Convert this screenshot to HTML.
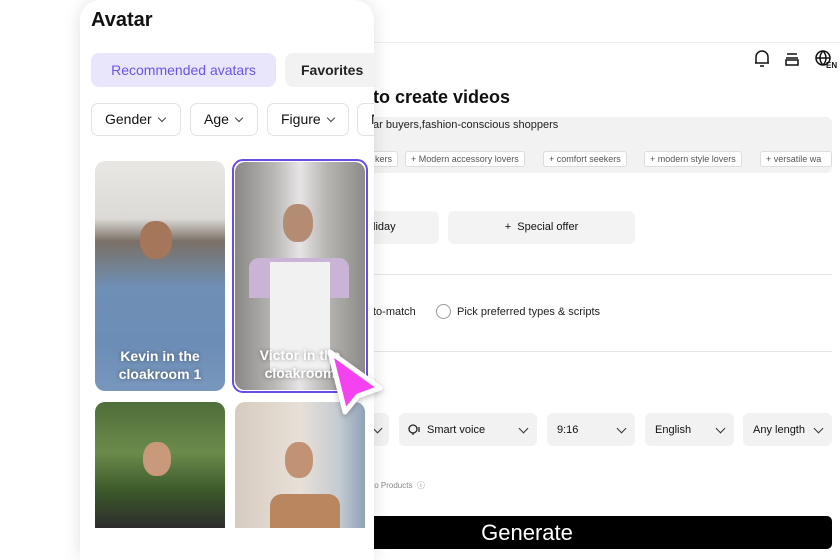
<!DOCTYPE html>
<html><head><meta charset="utf-8"><style>
*{margin:0;padding:0;box-sizing:border-box}
body{width:840px;height:560px;overflow:hidden;background:#fff;font-family:"Liberation Sans",sans-serif;position:relative;color:#111}
.abs{position:absolute}
.back{left:360px;top:42px;width:480px;height:518px;background:#fff;border-top:1px solid #eee}
.gbox{background:#f2f2f2;border-radius:6px}
.tag{position:absolute;top:151px;height:16px;border:1px solid #ddd;background:#fff;border-radius:3px;font-size:9px;color:#555;line-height:14px;padding:0 5px;white-space:nowrap}
.btn{position:absolute;background:#f3f3f3;border-radius:6px;font-size:11px;line-height:33px}
.sel{position:absolute;top:413px;height:33px;background:#f2f2f2;border-radius:6px;font-size:11px;line-height:34px;padding-left:10px}
.chev{position:absolute;right:10px;top:12px;width:7px;height:7px;border-right:1.4px solid #333;border-bottom:1.4px solid #333;transform:rotate(45deg)}
.panel{left:80px;top:0;width:294px;height:560px;background:#fff;border-radius:20px 20px 0 0;box-shadow:0 0 18px rgba(0,0,0,.12);overflow:hidden}
.flt{position:absolute;top:103px;height:33px;border:1px solid #e2e2e2;border-radius:7px;font-size:14px;line-height:31px;padding-left:13px;background:#fff}
.fch{display:inline-block;width:6px;height:6px;border-right:1.2px solid #444;border-bottom:1.2px solid #444;transform:rotate(45deg);margin-left:7px;position:relative;top:-3px}
.card{position:absolute;border-radius:10px;overflow:hidden}
.cap{position:absolute;left:0;right:0;text-align:center;color:#fff;font-size:14px;font-weight:bold;line-height:18px;text-shadow:0 0 4px rgba(0,0,0,.4)}
</style></head><body>
<div class="abs back">
</div>
<svg class="abs" style="left:752px;top:48px" width="88" height="22" viewBox="0 0 88 22">
<g fill="none" stroke="#111" stroke-width="1.5">
<path d="M4 15 V9 a6 6 0 0 1 12 0 V15 H3 M16 15 h1 M8 18 h4"/>
<path d="M35 6 h10 M34 10 h12 M34 12 h12 v5 h-12 z"/>
<circle cx="71" cy="10" r="7"/><path d="M64 10 h14 M71 3 c-4 4 -4 10 0 14 M71 3 c4 4 4 10 0 14"/>
</g>
<text x="74" y="20" font-size="8" font-weight="bold" fill="#111" font-family="Liberation Sans">EN</text>
</svg>
<div class="abs" style="left:373px;top:87px;font-size:18px;font-weight:bold">to create videos</div>
<div class="abs gbox" style="left:366px;top:117px;width:466px;height:56px"></div>
<div class="abs" style="left:373px;top:119px;font-size:11px;color:#222">ar buyers,fashion-conscious shoppers</div>
<div class="tag" style="left:356px;width:42px;text-align:right">kers</div>
<div class="tag" style="left:405px">+ Modern accessory lovers</div>
<div class="tag" style="left:543px">+ comfort seekers</div>
<div class="tag" style="left:644px">+ modern style lovers</div>
<div class="tag" style="left:760px;width:72px;overflow:hidden">+ versatile wa</div>
<div class="btn" style="left:360px;top:211px;width:79px;padding-left:13px">liday</div>
<div class="btn" style="left:448px;top:211px;width:187px;text-align:center">+&nbsp; Special offer</div>
<div class="abs" style="left:370px;top:274px;width:462px;height:1px;background:#e6e6e6"></div>
<div class="abs" style="left:373px;top:306px;font-size:11px;color:#222">to-match</div>
<div class="abs" style="left:436px;top:304px;width:15px;height:15px;border:1px solid #999;border-radius:50%"></div>
<div class="abs" style="left:457px;top:306px;font-size:11px;color:#222">Pick preferred types &amp; scripts</div>
<div class="abs" style="left:370px;top:351px;width:462px;height:1px;background:#e6e6e6"></div>
<div class="sel" style="left:350px;width:39px"><span class="chev" style="right:8px"></span></div>
<div class="sel" style="left:399px;width:138px;padding-left:28px">Smart voice<span class="chev"></span>
<svg style="position:absolute;left:9px;top:10px" width="14" height="13"><circle cx="5" cy="6" r="4" fill="none" stroke="#222" stroke-width="1.3"/><path d="M5 10v2M11 4v5" stroke="#222" stroke-width="1.3"/></svg></div>
<div class="sel" style="left:547px;width:88px">9:16<span class="chev"></span></div>
<div class="sel" style="left:645px;width:89px">English<span class="chev"></span></div>
<div class="sel" style="left:743px;width:89px">Any length<span class="chev"></span></div>
<div class="abs" style="left:372px;top:480px;font-size:8px;color:#888">to Products &nbsp;ⓘ</div>
<div class="abs" style="left:360px;top:516px;width:472px;height:33px;background:#000;border-radius:5px;color:#fff;font-size:22px;line-height:33px;text-align:center;padding-right:138px">Generate</div>

<div class="abs panel">
<div class="abs" style="left:11px;top:9px;font-size:20px;font-weight:bold">Avatar</div>
<div class="abs" style="left:11px;top:53px;width:185px;height:34px;background:#e9e6fb;border-radius:8px;color:#6b55e6;font-size:14px;line-height:34px;text-align:center">Recommended avatars</div>
<div class="abs" style="left:205px;top:53px;width:100px;height:34px;background:#f2f2f2;border-radius:8px;font-size:14px;line-height:34px;padding-left:16px;font-weight:bold;color:#222">Favorites</div>
<div class="flt" style="left:11px;width:90px">Gender<span class="fch"></span></div>
<div class="flt" style="left:110px;width:68px">Age<span class="fch"></span></div>
<div class="flt" style="left:187px;width:82px">Figure<span class="fch"></span></div>
<div class="flt" style="left:277px;width:30px">N</div>
<div class="card" style="left:15px;top:161px;width:130px;height:230px;background:linear-gradient(180deg,#e9e7e3 0%,#dcdad6 25%,#7a7066 35%,#6f8fb5 55%,#6c8db6 80%,#7997bd 100%)">
<div class="abs" style="left:45px;top:60px;width:32px;height:38px;border-radius:45%;background:#a6765a"></div>
<div class="cap" style="top:186px">Kevin in the<br>cloakroom 1</div></div>
<div class="abs" style="left:152px;top:159px;width:136px;height:234px;border:2px solid #6a4de6;border-radius:11px"></div>
<div class="card" style="left:155px;top:162px;width:130px;height:228px;background:linear-gradient(90deg,#8a8886,#b9b7b4 30%,#e6e4e4 50%,#b8b6b3 70%,#8d8b88)">
<div class="abs" style="left:48px;top:42px;width:30px;height:38px;border-radius:45%;background:#b48c74"></div>
<div class="abs" style="left:14px;top:96px;width:100px;height:40px;background:#c9b4d6;border-radius:10px 10px 0 0"></div>
<div class="abs" style="left:35px;top:100px;width:60px;height:110px;background:#f1f1f1"></div>
<div class="cap" style="top:184px">Victor in the<br>cloakroom</div></div>
<div class="card" style="left:15px;top:402px;width:130px;height:126px;border-radius:10px 10px 0 0;background:linear-gradient(180deg,#4f6e3a,#6b8b4c 40%,#3c5a2a 70%,#2d2d2d 100%)">
<div class="abs" style="left:48px;top:40px;width:28px;height:34px;border-radius:45%;background:#c9997c"></div></div>
<div class="card" style="left:155px;top:402px;width:130px;height:126px;border-radius:10px 10px 0 0;background:linear-gradient(90deg,#d6cbbf,#e8e0d8 50%,#c4cbd2 80%,#8fa2b8)">
<div class="abs" style="left:50px;top:40px;width:28px;height:36px;border-radius:45%;background:#c29274"></div>
<div class="abs" style="left:35px;top:92px;width:70px;height:40px;background:#b98660;border-radius:12px 12px 0 0"></div></div>
</div>
<svg class="abs" style="left:318px;top:340px" width="74" height="82" viewBox="318 340 74 82">
<path d="M330 352 L380 388 L358 396 L345 412 Z" fill="#f542f0" stroke="#fff" stroke-width="5" stroke-linejoin="round" style="filter:drop-shadow(0 2px 3px rgba(0,0,0,.25))"/>
</svg>
</body></html>
